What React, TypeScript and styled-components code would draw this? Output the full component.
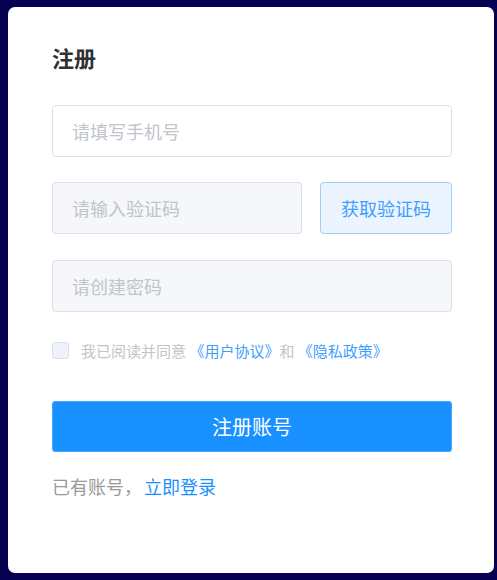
import { useState } from "react";
import styled, { createGlobalStyle } from "styled-components";

const GlobalStyle = createGlobalStyle`
	html, body {
		margin: 0;
		padding: 0;
		background: #060051;
	}
	body {
		font-family: "Noto Sans CJK SC", "Noto Sans", sans-serif;
	}
	* {
		box-sizing: border-box;
	}
`;

export default function App() {
	const [agreed, setAgreed] = useState(false);

	return (
		<Page>
			<GlobalStyle />
			<Card>
				<Title>注册</Title>

				<Form>
					<Input placeholder="请填写手机号" />

					<CodeRow>
						<Input $filled placeholder="请输入验证码" />
						<CodeButton type="button">获取验证码</CodeButton>
					</CodeRow>

					<Input $filled type="password" placeholder="请创建密码" />

					<AgreeRow>
						<Check
							type="checkbox"
							checked={agreed}
							onChange={(e) => setAgreed(e.target.checked)}
						/>
						<AgreeText>
							我已阅读并同意 <Link>《用户协议》</Link>和 <Link>《隐私政策》</Link>
						</AgreeText>
					</AgreeRow>

					<SubmitButton type="button">注册账号</SubmitButton>
				</Form>

				<Footer>
					已有账号，<FooterLink>立即登录</FooterLink>
				</Footer>
			</Card>
		</Page>
	);
}

// styles

const Page = styled.div`
	width: 497px;
	height: 580px;
	padding: 7px 3px 7px 8px;
`;

const Card = styled.div`
	width: 486px;
	height: 566px;
	background: #ffffff;
	border-radius: 7px;
	padding: 35px 42px 0 44px;
`;

const Title = styled.h1`
	margin: 0;
	font-size: 22px;
	line-height: 30px;
	font-weight: 700;
	color: #303133;
`;

const Form = styled.div`
	display: flex;
	flex-direction: column;
	margin-top: 33px;
	gap: 25px;
`;

const Input = styled.input<{ $filled?: boolean }>`
	width: 100%;
	height: 52px;
	padding: 0 19px;
	border: 1px solid #dcdfe6;
	border-radius: 4px;
	background: ${({ $filled }) => ($filled ? "#f5f7fa" : "#ffffff")};
	font-family: inherit;
	font-size: 18px;
	color: #606266;
	outline: none;

	&::placeholder {
		color: #c0c4cc;
	}
`;

const CodeRow = styled.div`
	display: flex;
	gap: 18px;
	margin-bottom: 1px;

	${Input} {
		flex: 1;
		min-width: 0;
	}
`;

const CodeButton = styled.button`
	width: 132px;
	height: 52px;
	flex-shrink: 0;
	border: 1px solid #a0cfff;
	border-radius: 4px;
	background: #ecf5ff;
	color: #409eff;
	font-family: inherit;
	font-size: 18px;
	cursor: pointer;
`;

const AgreeRow = styled.div`
	display: flex;
	align-items: center;
	gap: 12px;
	margin-top: 3px;
	height: 20px;
`;

const Check = styled.input`
	appearance: none;
	margin: 0;
	width: 17px;
	height: 17px;
	border: 1px solid #dcdfe6;
	border-radius: 3px;
	background: #edf2fc;
	cursor: pointer;

	&:checked {
		background: #409eff;
		border-color: #409eff;
	}
`;

const AgreeText = styled.span`
	font-size: 15px;
	color: #c0c4cc;
	white-space: nowrap;
`;

const Link = styled.a`
	color: #409eff;
	cursor: pointer;
`;

const SubmitButton = styled.button`
	margin-top: 16px;
	width: 100%;
	height: 51px;
	border: 1px solid #40a9ff;
	border-radius: 3px;
	background: #1890ff;
	color: #ffffff;
	font-family: inherit;
	font-size: 20px;
	cursor: pointer;
`;

const Footer = styled.div`
	margin-top: 22px;
	font-size: 18px;
	line-height: 24px;
	color: #999999;
`;

const FooterLink = styled.a`
	margin-left: 2px;
	color: #1890ff;
	cursor: pointer;
`;
